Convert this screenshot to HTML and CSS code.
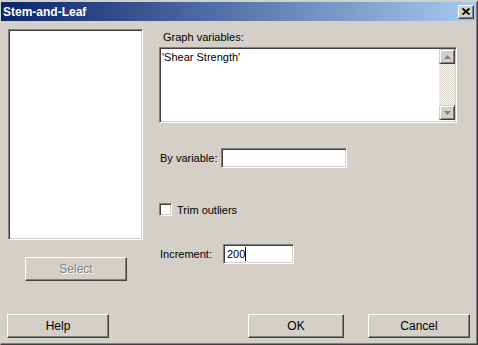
FILE: index.html
```html
<!DOCTYPE html>
<html lang="en">
<head>
    <meta charset="UTF-8">
    <title>Stem-and-Leaf</title>
    <link rel="stylesheet" href="styles.css">
</head>
<body>
    <div class="window">
        <div class="titlebar">
            <span class="title">Stem-and-Leaf</span>
            <div class="close-button">
                <svg width="8" height="7" viewBox="0 0 8 7">
                    <path d="M0.5 0.5 L7.5 6.5 M7.5 0.5 L0.5 6.5" stroke="#000" stroke-width="1.8" fill="none"/>
                </svg>
            </div>
        </div>

        <div class="dialog-body">
            <div class="left-column">
                <div class="variable-list"></div>
                <div class="button select-button disabled">Select</div>
            </div>

            <div class="right-column">
                <div class="field-label">Graph variables:</div>
                <div class="text-box">
                    <div class="text-box-content">'Shear Strength'</div>
                    <div class="scrollbar">
                        <div class="scroll-button">
                            <svg width="7" height="4" viewBox="0 0 7 4"><path d="M3.5 0 L7 4 L0 4 Z" fill="#808080"/></svg>
                        </div>
                        <div class="scroll-track"></div>
                        <div class="scroll-button">
                            <svg width="7" height="4" viewBox="0 0 7 4"><path d="M0 0 L7 0 L3.5 4 Z" fill="#808080"/></svg>
                        </div>
                    </div>
                </div>

                <div class="field-row by-row">
                    <span class="row-label by-label">By variable:</span>
                    <div class="input by-input"></div>
                </div>

                <div class="check-row">
                    <div class="checkbox"></div>
                    <span>Trim outliers</span>
                </div>

                <div class="field-row increment-row">
                    <span class="row-label increment-label">Increment:</span>
                    <div class="input increment-input"><span class="caret">200</span></div>
                </div>
            </div>
        </div>

        <div class="footer">
            <div class="button help-button">Help</div>
            <div class="button ok-button">OK</div>
            <div class="button cancel-button">Cancel</div>
        </div>
    </div>
</body>
</html>
```

FILE: styles.css
```css
body {
    margin: 0;
    font-family: 'Liberation Sans', Arial, sans-serif;
    font-size: 11px;
    color: #000;
    background-color: #d4d0c8;
}

.window {
    width: 478px;
    height: 345px;
    box-sizing: border-box;
    border-style: solid;
    border-width: 2px 1px 1px 1px;
    border-color: #d4d0c8 #404040 #404040 #d4d0c8;
    box-shadow: inset -1px -1px #808080;
    background-color: #d4d0c8;
    display: flex;
    flex-direction: column;
    white-space: nowrap;
}

.titlebar {
    height: 19px;
    margin-right: 1px;
    display: flex;
    align-items: center;
    justify-content: space-between;
    background: linear-gradient(to right, #0a246a, #a6caf0);
}

.title {
    padding-left: 2px;
    color: #fff;
    font-weight: bold;
    font-size: 12px;
}

.close-button {
    width: 16px;
    height: 14px;
    margin-right: 2px;
    box-sizing: border-box;
    background-color: #d4d0c8;
    border: 1px solid;
    border-color: #fff #404040 #404040 #fff;
    box-shadow: inset -1px -1px #808080;
    display: flex;
    align-items: center;
    justify-content: center;
}

.dialog-body {
    display: flex;
    gap: 16px;
}

.left-column {
    margin-left: 7px;
    margin-top: 8px;
    display: flex;
    flex-direction: column;
}

.variable-list {
    width: 135px;
    height: 211px;
    box-sizing: border-box;
    background-color: #fff;
    border: 1px solid;
    border-color: #808080 #fff #fff #808080;
    box-shadow: inset 1px 1px #404040, inset -1px -1px #d4d0c8;
}

.button {
    height: 24px;
    box-sizing: border-box;
    border: 1px solid;
    border-color: #fff #404040 #404040 #fff;
    box-shadow: inset -1px -1px #808080;
    display: flex;
    align-items: center;
    justify-content: center;
    font-size: 12px;
}

.select-button {
    width: 102px;
    margin-top: 17px;
    margin-left: 17px;
}

.button.disabled {
    color: #808080;
    text-shadow: 1px 1px #fff;
}

.right-column {
    display: flex;
    flex-direction: column;
}

.field-label {
    margin-top: 10px;
    padding-left: 4px;
    line-height: 13px;
}

.text-box {
    width: 298px;
    height: 76px;
    margin-top: 3px;
    box-sizing: border-box;
    background-color: #fff;
    border: 1px solid;
    border-color: #808080 #fff #fff #808080;
    box-shadow: inset 1px 1px #404040, inset -1px -1px #d4d0c8;
    padding: 2px 1px 1px 2px;
    display: flex;
}

.text-box-content {
    flex: 1;
    line-height: 14px;
}

.scrollbar {
    width: 16px;
    display: flex;
    flex-direction: column;
    margin-top: -1px;
    margin-bottom: 1px;
}

.scroll-button {
    height: 15px;
    box-sizing: border-box;
    background-color: #d4d0c8;
    border: 1px solid;
    border-color: #d4d0c8 #404040 #404040 #d4d0c8;
    box-shadow: inset 1px 1px #fff, inset -1px -1px #808080;
    display: flex;
    align-items: center;
    justify-content: center;
}

.scroll-track {
    flex: 1;
    background-color: #fff;
    background-image: repeating-conic-gradient(#d4d0c8 0 25%, #fff 0 50%);
    background-size: 2px 2px;
}

.field-row {
    display: flex;
    align-items: center;
}

.row-label {
    padding-left: 1px;
    box-sizing: border-box;
}

.input {
    height: 20px;
    box-sizing: border-box;
    background-color: #fff;
    border: 1px solid;
    border-color: #808080 #fff #fff #808080;
    box-shadow: inset 1px 1px #404040, inset -1px -1px #d4d0c8;
    display: flex;
    align-items: center;
    padding-left: 3px;
}

.by-row {
    margin-top: 25px;
}

.by-label {
    width: 62px;
}

.by-input {
    width: 126px;
}

.check-row {
    margin-top: 35px;
    display: flex;
    align-items: center;
    gap: 5px;
}

.checkbox {
    width: 13px;
    height: 13px;
    box-sizing: border-box;
    background-color: #fff;
    border: 1px solid;
    border-color: #808080 #fff #fff #808080;
    box-shadow: inset 1px 1px #404040, inset -1px -1px #d4d0c8;
}

.increment-row {
    margin-top: 28px;
}

.increment-label {
    width: 64px;
}

.increment-input {
    width: 71px;
}

.caret {
    border-right: 1px solid #000;
    line-height: 14px;
}

.footer {
    margin-top: auto;
    margin-bottom: 6px;
    padding-left: 6px;
    padding-right: 7px;
    display: flex;
}

.help-button {
    width: 102px;
}

.ok-button {
    width: 96px;
    margin-left: auto;
}

.cancel-button {
    width: 102px;
    margin-left: 24px;
}
```
